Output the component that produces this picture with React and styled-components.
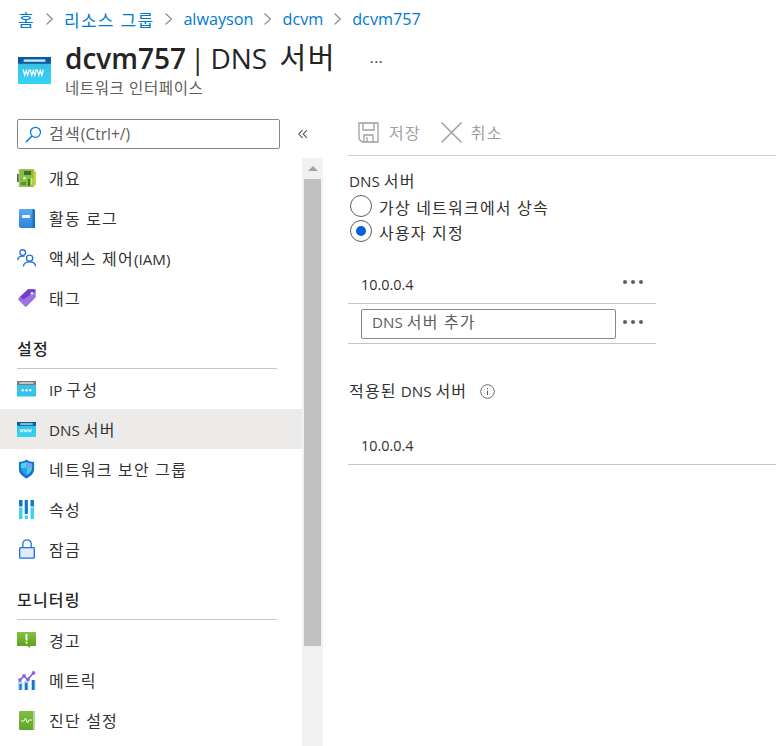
import React from 'react';
import styled, { createGlobalStyle } from 'styled-components';

const Global = createGlobalStyle`
  html, body { margin: 0; padding: 0; background: #fff; overflow: hidden; }
  * { box-sizing: border-box; }
  body { font-family: "Open Sans", "Noto Sans CJK KR", sans-serif; color: #323130; }
`;
const FONT = `"Open Sans", "Noto Sans CJK KR", sans-serif`;

const Page = styled.div`width: 776px; height: 746px; overflow: hidden; display: flex; flex-direction: column; font-family: ${FONT};`;
const Ko = styled.span`font-size: var(--ko-fs, 16px); letter-spacing: var(--ko-ls, 1.2px);`;
const Crumbs = styled.nav`--ko-fs: 17px; --ko-ls: 1.3px; height: 38px; padding: 0 0 0 18px; display: flex; align-items: center; gap: 10px; font-size: 16.2px; color: #0078d4; white-space: nowrap;`;
const CrumbSep = styled.svg`width: 9px; height: 14px; flex: none;`;
const Header = styled.header`height: 81px; padding: 1px 0 0 18px; display: flex; align-items: flex-start;`;
const HeaderIcon = styled.div`width: 33px; height: 27px; margin-top: 18px; flex: none; display: flex;`;
const TitleBlock = styled.div`margin-left: 14px; display: flex; flex-direction: column;`;
const Title = styled.h1`--ko-fs: 29px; --ko-ls: 1.5px; margin: 0; font-size: 28px; line-height: 38px; font-weight: 400; color: #252423; white-space: nowrap; b { font-weight: 600; }`;
const Pipe = styled.span`margin: 0 5px 0 4px;`;
const TitleKo = styled.span`margin-left: 5px;`;
const Subtitle = styled.div`--ko-fs: 15.5px; --ko-ls: 0.6px; font-size: 14.4px; line-height: 20px; color: #605e5c; margin-top: 1px;`;
const More = styled.div`margin: 14px 0 0 34px; font-size: 15px; line-height: 16px; color: #323130; letter-spacing: 0.5px;`;
const Body = styled.div`flex: 1; display: flex; min-height: 0;`;
const Side = styled.aside`width: 323px; flex: none; display: flex; flex-direction: column;`;
const SearchRow = styled.div`height: 39px; padding-left: 17px; display: flex; align-items: flex-start; flex: none;`;
const SearchBox = styled.div`width: 263px; height: 30px; border: 1px solid #8a8886; border-radius: 2px; display: flex; align-items: center; padding-left: 7px; gap: 7px; font-size: 15.5px; color: #605e5c;`;
const SearchText = styled.span`white-space: nowrap; margin-bottom: 2px;`;
const Collapse = styled.div`margin-left: 18px; width: 12px; height: 30px; display: flex; align-items: center;`;
const SideBody = styled.div`flex: 1; display: flex; min-height: 0;`;
const Nav = styled.div`width: 302px; flex: none;`;
const NavItem = styled.div`height: 40px; display: flex; align-items: center; padding-left: 17px; font-size: 15.2px; color: #323130; white-space: nowrap; background: ${p => p.$active ? '#edebe9' : 'transparent'};`;
const NavIcon = styled.span`width: 19px; height: 20px; margin-right: 13px; display: flex; align-items: center; justify-content: center; flex: none;`;
const Section = styled.div`margin: ${p => p.$top}px 25px 0 17px; height: 31px; border-bottom: 1px solid #c8c6c4; font-size: 14.4px; font-weight: 500; color: #252423; line-height: 23px;`;
const Scroll = styled.div`width: 21px; flex: none; background: #f1f1f1; position: relative; padding: 21px 2px 0;`;
const ScrollArrow = styled.div`position: absolute; top: 8px; left: 6px; width: 0; height: 0; border-left: 5px solid transparent; border-right: 5px solid transparent; border-bottom: 5px solid #a3a3a3;`;
const Thumb = styled.div`height: 467px; width: 17px; background: #c1c1c1;`;
const Main = styled.main`flex: 1; padding-left: 25px; min-width: 0;`;
const Toolbar = styled.div`height: 37px; border-bottom: 1px solid #d2d0ce; display: flex; align-items: flex-start; padding: 1px 0 0 10px; font-size: 14.4px; color: #a19f9d;`;
const ToolBtn = styled.div`display: flex; align-items: center; gap: ${p => p.$gap}px; margin-right: 20px; height: 24px;`;
const FieldLabel = styled.div`font-size: 15.2px; line-height: 20px; color: #323130; margin: 15px 0 0 1px;`;
const Radios = styled.div`display: flex; flex-direction: column; gap: 1px; margin-top: 3px;`;
const RadioRow = styled.div`display: flex; align-items: center; height: 24px; font-size: 14.4px; color: #323130; gap: 7px; margin-left: 2px;`;
const RadioText = styled.span`margin-top: 2px; white-space: nowrap;`;
const RadioDot = styled.span`width: 22px; height: 22px; border: 1px solid #605e5c; border-radius: 50%; display: flex; align-items: center; justify-content: center; &::after { content: ''; width: 10px; height: 10px; border-radius: 50%; background: ${p => p.$on ? '#0063d8' : 'transparent'}; }`;
const ServerList = styled.div`width: 308px; margin-top: 21px;`;
const ServerRow = styled.div`height: 40px; border-bottom: 1px solid #c8c6c4; display: flex; align-items: center; padding: 0 0 0 13px; justify-content: space-between; font-size: 14.4px; color: #323130;`;
const ServerValue = styled.span`margin-top: 1px;`;
const AddInput = styled.div`width: 255px; height: 30px; border: 1px solid #8a8886; border-radius: 2px; padding-left: 10px; line-height: 25px; font-size: 15.2px; color: #605e5c;`;
const Dots = styled.div`display: flex; gap: 4px; margin: 0 13px 4px 0;`;
const Dot = styled.span`width: 4px; height: 4px; border-radius: 50%; background: #605e5c;`;
const Applied = styled.div`display: flex; align-items: center; gap: 13px; margin: 37px 0 0 1px; font-size: 15.2px; line-height: 20px; color: #323130;`;
const AppliedRow = styled.div`height: 54px; margin-top: 10px; border-bottom: 1px solid #c8c6c4; padding: 15px 0 0 13px; display: flex; align-items: center; font-size: 14.4px; color: #323130;`;

/* Hangul in the reference runs wider than the installed CJK face, so it is set apart from Latin text. */
const T = ({ children }) => children.split(/([가-힣]+(?: [가-힣]+)*)/).map((part, i) =>
  /[가-힣]/.test(part) ? <Ko key={i}>{part}</Ko> : part
);

const Sep = () => <CrumbSep viewBox="0 0 9 14"><path d="M1.5 1.5 7.5 7l-6 5.5" fill="none" stroke="#8a8886" strokeWidth="1.1" /></CrumbSep>;

const Www = ({ w = 19, h = 15 }) => (
  <svg width={w} height={h} viewBox="0 0 35 28" preserveAspectRatio="none">
    <defs><linearGradient id="wg" x1="0" y1="0" x2="0" y2="1"><stop offset="0" stopColor="#5ea0ef" /><stop offset=".3" stopColor="#37c2e6" /><stop offset="1" stopColor="#32d4f5" /></linearGradient></defs>
    <rect x="0" y="0" width="35" height="28" rx="1" fill="url(#wg)" />
    <rect x="0" y="0" width="35" height="7" fill="#0a5c9c" />
    <rect x="6" y="2.500" width="23" height="2.500" fill="#c8e4f5" />
    <path d="M4 13l1.600 6 1.600-5 1.600 5 1.600-6M11.500 13l1.600 6 1.600-5 1.600 5 1.600-6M19 13l1.600 6 1.600-5 1.600 5 1.600-6" transform="translate(1.500 0)" fill="none" stroke="#fff" strokeWidth="1.300" />
  </svg>
);
const IpIcon = () => (
  <svg width="19" height="16" viewBox="0 0 19 16">
    <rect width="19" height="15.500" rx=".5" fill="#35c5ea" />
    <rect width="19" height="4" fill="#7a7a7a" />
    <rect x="2.500" y="1.300" width="14" height="1.400" fill="#e4e4e4" />
    <circle cx="5.800" cy="9.300" r="1.200" fill="#fff" /><circle cx="9.500" cy="9.300" r="1.200" fill="#fff" /><circle cx="13.200" cy="9.300" r="1.200" fill="#fff" />
  </svg>
);
const Board = () => (
  <svg width="19" height="18" viewBox="0 0 19 18">
    <rect x="0" y="5" width="2" height="8" fill="#5e5e5e" />
    <rect x="16.500" y="2" width="2.500" height="14" fill="#f2c811" />
    <rect x="2" y="0" width="15" height="18" fill="#86bd45" />
    <rect x="2" y="0" width="15" height="18" fill="none" stroke="#b5d494" strokeWidth=".7" />
    <rect x="7" y="2" width="7" height="4" fill="#3f6f22" />
    <circle cx="7.500" cy="9" r="1.500" fill="#e2f0bd" />
    <rect x="11" y="10" width="2" height="7" fill="#3e7a1f" /><rect x="14" y="9" width="1.500" height="7" fill="#d9e68f" />
    <rect x="4" y="13" width="5" height="3" fill="#5a9428" />
  </svg>
);
const Book = () => (
  <svg width="16" height="19" viewBox="0 0 16 19">
    <defs><linearGradient id="bk" x1="0" y1="0" x2="0" y2="1"><stop offset="0" stopColor="#5ba9ee" /><stop offset="1" stopColor="#2c83da" /></linearGradient></defs>
    <path d="M1 0h13a2 2 0 0 1 2 2v16a1 1 0 0 1-1 1H2a2 2 0 0 1-2-2V1a1 1 0 0 1 1-1z" fill="url(#bk)" />
    <path d="M13.500 0H14a2 2 0 0 1 2 2v16a1 1 0 0 1-1 1h-1.500z" fill="#1a6fc0" />
    <rect x="3" y="6" width="8" height="3" rx=".5" fill="#eef7fd" />
  </svg>
);
const People = () => (
  <svg width="20" height="20" viewBox="0 0 20 20" fill="none" stroke="#1f70e0" strokeWidth="1.400">
    <circle cx="6" cy="4.300" r="3" />
    <path d="M.8 12.200C1 9.500 3 8 6 8c.7 0 1.300.1 1.900.3" />
    <circle cx="13.300" cy="10.300" r="3.300" />
    <path d="M6.700 19c.2-3 3-5 6.600-5s6.200 2 6.400 5" />
  </svg>
);
const Tag = () => (
  <svg width="18" height="18" viewBox="0 0 18 18">
    <path d="M10 .3h6a1.700 1.700 0 0 1 1.700 1.700v6.400L8.800 17.300a1.500 1.500 0 0 1-2.100 0L.7 11.200a1.500 1.500 0 0 1 0-2.100z" fill="#9b74df" />
    <path d="M10 .3h6a1.700 1.700 0 0 1 1.700 1.700L5.500 10.500 2 8z" fill="#6f3fc4" />
    <circle cx="14" cy="4.300" r="1.400" fill="#e6dcf7" />
  </svg>
);
const Shield = () => (
  <svg width="17" height="20" viewBox="0 0 18 20">
    <path d="M9 0C6.500 2 3.500 2.600 1 2.600V10c0 5 4 8 8 10 4-2 8-5 8-10V2.600C14.500 2.600 11.500 2 9 0z" fill="#1272c4" />
    <path d="M9 2.300C7 3.600 5 4 3 4.200V9h6z" fill="#4fd3f7" />
    <path d="M9 2.300V9h6V4.200C13 4 11 3.600 9 2.300z" fill="#6fa9ee" />
    <path d="M3 9h6v8C6.500 15.600 3.200 13 3 9z" fill="#2d9ce8" />
    <path d="M9 9h6c-.2 4-3.500 6.600-6 8z" fill="#48c8f2" />
  </svg>
);
const Bars = () => (
  <svg width="15" height="19" viewBox="0 0 15 19">
    <rect x="0" y="0" width="3.500" height="6.500" fill="#0f78d2" /><rect x="0" y="7.500" width="3.500" height="11.500" fill="#3fd0f4" />
    <rect x="5.700" y="0" width="3.200" height="14" fill="#0f78d2" /><rect x="5.700" y="15.500" width="3.200" height="3.500" fill="#3fd0f4" />
    <rect x="11.500" y="0" width="3.500" height="6.500" fill="#0f78d2" /><rect x="11.500" y="7.500" width="3.500" height="11.500" fill="#3fd0f4" />
  </svg>
);
const Lock = () => (
  <svg width="16" height="20" viewBox="0 0 16 20" fill="none">
    <path d="M3.800 8.500V5a4.200 4.200 0 0 1 8.400 0v3.500" stroke="#1f70e0" strokeWidth="1.300" />
    <rect x=".7" y="8.600" width="14.600" height="10.600" rx=".8" fill="#dfeafa" stroke="#1f70e0" strokeWidth="1.300" />
  </svg>
);
const Alert = () => (
  <svg width="19" height="16" viewBox="0 0 19 16">
    <defs><linearGradient id="al" x1="0" y1="0" x2="0" y2="1"><stop offset="0" stopColor="#86c142" /><stop offset="1" stopColor="#579e1e" /></linearGradient></defs>
    <path d="M.5 0h18a.5.5 0 0 1 .5.5v13a.5.5 0 0 1-.5.5H13v2l-2.500-2H.5a.5.5 0 0 1-.5-.5V.5A.5.5 0 0 1 .5 0z" fill="url(#al)" />
    <rect x="8.600" y="2" width="1.800" height="6.500" fill="#fff" /><rect x="8.600" y="9.800" width="1.800" height="1.800" fill="#fff" />
  </svg>
);
const Metric = () => (
  <svg width="18" height="19" viewBox="0 0 18 19">
    <rect x="0" y="11" width="4.500" height="8" fill="#a8d8fa" /><rect x="1.500" y="13" width="2" height="6" fill="#1b6fc4" />
    <rect x="6" y="10" width="4.500" height="9" fill="#a8d8fa" /><rect x="7" y="12" width="2.500" height="7" fill="#1b6fc4" />
    <rect x="13" y="9" width="4.500" height="10" fill="#a8d8fa" /><rect x="14" y="9" width="2.500" height="10" fill="#1b6fc4" />
    <path d="M2 9 6 5l3.500 3.500L15.500 2" fill="none" stroke="#7b4fd4" strokeWidth="1.400" />
    <circle cx="2" cy="9" r="1.900" fill="#9066e0" /><circle cx="6" cy="5" r="1.900" fill="#9066e0" /><circle cx="10" cy="8.500" r="1.900" fill="#9066e0" /><circle cx="15.500" cy="2" r="1.900" fill="#9066e0" />
  </svg>
);
const Diag = () => (
  <svg width="16" height="19" viewBox="0 0 16 19">
    <defs><linearGradient id="dg" x1="0" y1="0" x2="0" y2="1"><stop offset="0" stopColor="#7fbf3f" /><stop offset="1" stopColor="#5fa526" /></linearGradient></defs>
    <rect width="16" height="19" rx="1" fill="url(#dg)" />
    <path d="M14 0h1a1 1 0 0 1 1 1v17a1 1 0 0 1-1 1h-1z" fill="#b7d49c" />
    <path d="M2 10h3l1.500-3 2 5 1.500-3h3" fill="none" stroke="#f2f9e8" strokeWidth="1" />
  </svg>
);
const Mag = () => (
  <svg width="17" height="17" viewBox="0 0 17 17" fill="none" stroke="#0078d4" strokeWidth="1.200"><circle cx="10.500" cy="6.300" r="5" /><path d="M7 10 1 16" strokeWidth="1.500" /></svg>
);
const Chev = () => (
  <svg width="10" height="10" viewBox="0 0 10 10" fill="none" stroke="#484644" strokeWidth="1.100"><path d="M4.500 1 .8 5l3.700 4M9 1 5.300 5 9 9" /></svg>
);
const Save = () => (
  <svg width="21" height="21" viewBox="0 0 21 21" fill="none" stroke="#a19f9d" strokeWidth="1.300">
    <path d="M1 1h19v19H4l-3-3z" /><path d="M5 1v7h11V1M6 20v-7h9v7M9 15v5" />
  </svg>
);
const Cross = () => (
  <svg width="21" height="21" viewBox="0 0 21 21" stroke="#a19f9d" strokeWidth="1.500"><path d="M.5.500l20 20M20.500.500l-20 20" /></svg>
);
const Info = () => (
  <svg width="15" height="15" viewBox="0 0 15 15" fill="none" stroke="#605e5c"><circle cx="7.500" cy="7.500" r="6.800" strokeWidth=".9" /><path d="M7.500 6.500v4.500M7.500 4v1.200" strokeWidth="1" /></svg>
);

const DotsBtn = () => <Dots><Dot /><Dot /><Dot /></Dots>;

const top = [[Board, '개요'], [Book, '활동 로그'], [People, '액세스 제어(IAM)'], [Tag, '태그']];
const settings = [[IpIcon, 'IP 구성'], [Www, 'DNS 서버', true], [Shield, '네트워크 보안 그룹'], [Bars, '속성'], [Lock, '잠금']];
const monitoring = [[Alert, '경고'], [Metric, '메트릭'], [Diag, '진단 설정']];

const Items = ({ list }) => list.map(([Icon, text, active]) => (
  <NavItem key={text} $active={active}><NavIcon><Icon /></NavIcon><span><T>{text}</T></span></NavItem>
));

export default function App() {
  return (
    <Page>
      <Global />
      <Crumbs>
        <T>홈</T><Sep /><T>리소스 그룹</T><Sep /><span>alwayson</span><Sep /><span>dcvm</span><Sep /><span>dcvm757</span>
      </Crumbs>
      <Header>
        <HeaderIcon><Www w={33} h={27} /></HeaderIcon>
        <TitleBlock>
          <Title><b>dcvm757</b><Pipe>|</Pipe>DNS <TitleKo><T>서버</T></TitleKo></Title>
          <Subtitle><T>네트워크 인터페이스</T></Subtitle>
        </TitleBlock>
        <More>···</More>
      </Header>
      <Body>
        <Side>
          <SearchRow>
            <SearchBox><Mag /><SearchText><T>검색(Ctrl+/)</T></SearchText></SearchBox>
            <Collapse><Chev /></Collapse>
          </SearchRow>
          <SideBody>
            <Nav>
              <Items list={top} />
              <Section $top={20}><T>설정</T></Section>
              <Items list={settings} />
              <Section $top={20}><T>모니터링</T></Section>
              <Items list={monitoring} />
            </Nav>
            <Scroll><ScrollArrow /><Thumb /></Scroll>
          </SideBody>
        </Side>
        <Main>
          <Toolbar>
            <ToolBtn $gap={10}><Save /><T>저장</T></ToolBtn>
            <ToolBtn $gap={9}><Cross /><T>취소</T></ToolBtn>
          </Toolbar>
          <FieldLabel><T>DNS 서버</T></FieldLabel>
          <Radios>
            <RadioRow><RadioDot /><RadioText><T>가상 네트워크에서 상속</T></RadioText></RadioRow>
            <RadioRow><RadioDot $on /><RadioText><T>사용자 지정</T></RadioText></RadioRow>
          </Radios>
          <ServerList>
            <ServerRow><ServerValue>10.0.0.4</ServerValue><DotsBtn /></ServerRow>
            <ServerRow><AddInput><T>DNS 서버 추가</T></AddInput><DotsBtn /></ServerRow>
          </ServerList>
          <Applied><span><T>적용된 DNS 서버</T></span><Info /></Applied>
          <AppliedRow>10.0.0.4</AppliedRow>
        </Main>
      </Body>
    </Page>
  );
}
